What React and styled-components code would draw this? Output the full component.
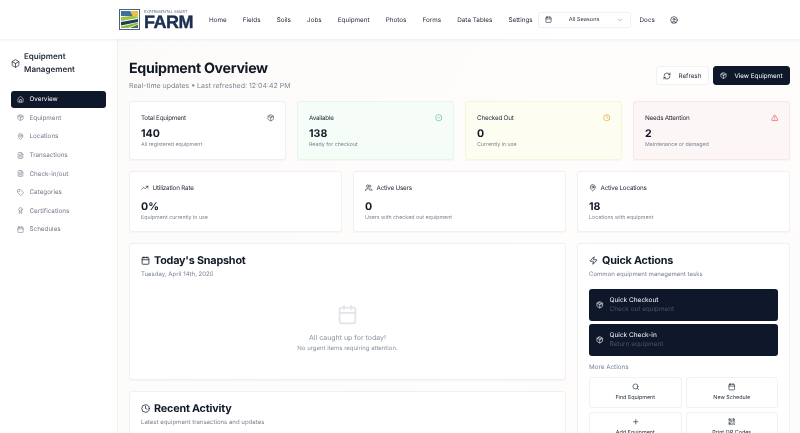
import React from 'react';
import styled, { createGlobalStyle } from 'styled-components';
import {
  Award, Box, Calendar, ChevronDown, CircleCheck, CircleUser, Clock, FileText, House, MapPin,
  Package, Plus, QrCode, RefreshCw, Search, Tag, TrendingUp, TriangleAlert, Users, Zap,
} from 'lucide-react';

const navLinks = ['Home', 'Fields', 'Soils', 'Jobs', 'Equipment', 'Photos', 'Forms', 'Data Tables', 'Settings'];

const sideLinks = [
  { label: 'Overview', icon: House, active: true },
  { label: 'Equipment', icon: Package },
  { label: 'Locations', icon: MapPin },
  { label: 'Transactions', icon: FileText },
  { label: 'Check-in/out', icon: FileText },
  { label: 'Categories', icon: Tag },
  { label: 'Certifications', icon: Award },
  { label: 'Schedules', icon: Calendar },
];

const stats = [
  { label: 'Total Equipment', value: '140', sub: 'All registered equipment', icon: Package, tone: 'plain' },
  { label: 'Available', value: '138', sub: 'Ready for checkout', icon: CircleCheck, tone: 'green' },
  { label: 'Checked Out', value: '0', sub: 'Currently in use', icon: Clock, tone: 'yellow' },
  { label: 'Needs Attention', value: '2', sub: 'Maintenance or damaged', icon: TriangleAlert, tone: 'red' },
];

const metrics = [
  { label: 'Utilization Rate', value: '0%', sub: 'Equipment currently in use', icon: TrendingUp },
  { label: 'Active Users', value: '0', sub: 'Users with checked out equipment', icon: Users },
  { label: 'Active Locations', value: '18', sub: 'Locations with equipment', icon: MapPin },
];

const tones = {
  plain: { bg: '#ffffff', border: '#eeeff2', icon: '#4b5563' },
  green: { bg: '#f6fdf8', border: '#e6f6ea', icon: '#5cb879' },
  yellow: { bg: '#fefdf2', border: '#f9f6d8', icon: '#e0a030' },
  red: { bg: '#fdf6f6', border: '#f9e6e6', icon: '#e0525a' },
};

const GlobalStyle = createGlobalStyle`
  html, body { margin: 0; padding: 0; height: 100%; overflow: hidden; }
  body {
    font-family: Inter, "Liberation Sans", sans-serif;
    color: #0f172a;
    background: #fff;
    text-rendering: geometricPrecision;
    -webkit-font-smoothing: antialiased;
  }
  * { box-sizing: border-box; }
`;

const Page = styled.div`
  width: 800px;
  height: 433px;
  display: flex;
  flex-direction: column;
  overflow: hidden;
  will-change: transform;
`;

const Header = styled.header`
  height: 39px;
  flex: none;
  display: flex;
  align-items: center;
  padding-left: 119px;
  background: #fff;
  box-shadow: 0 1px 3px rgba(15, 23, 42, 0.07);
  position: relative;
  z-index: 2;
`;

const Logo = styled.div`
  display: flex;
  align-items: center;
  gap: 4px;
  width: 90px;
`;

const LogoText = styled.div`
  display: flex;
  flex-direction: column;
  color: #1b2f52;
`;

const LogoSmall = styled.span`
  font-size: 3.7px;
  line-height: 6px;
  letter-spacing: 0.1px;
  color: #5b6472;
`;

const LogoBig = styled.span`
  font-family: "Liberation Sans", sans-serif;
  font-size: 18px;
  line-height: 15px;
  font-weight: 700;
  letter-spacing: -0.5px;
  -webkit-text-stroke: 0.4px #1b2f52;
`;

const Nav = styled.nav`
  display: flex;
  align-items: center;
  gap: 16.2px;
`;

const NavLink = styled.span`
  font-size: 6.3px;
  color: #1f2937;
  white-space: nowrap;
`;

const SeasonSelect = styled.div`
  width: 93px;
  height: 16px;
  margin-left: 5px;
  padding: 0 7px 0 6px;
  display: flex;
  align-items: center;
  justify-content: space-between;
  border: 1px solid #eef0f3;
  border-radius: 3px;
  font-size: 5.6px;
  color: #1f2937;
`;

const DocsLink = styled(NavLink)`
  margin-left: 9px;
`;

const UserIcon = styled(CircleUser)`
  margin-left: 15px;
  color: #1f2937;
`;

const Body = styled.div`
  flex: 1;
  display: flex;
  min-height: 0;
`;

const Sidebar = styled.aside`
  width: 118px;
  flex: none;
  padding: 11px 11px 0;
  background: #fff;
  border-right: 1px solid #f0f1f3;
`;

const SideTitle = styled.div`
  display: flex;
  align-items: center;
  gap: 4px;
  margin: 0 0 15px 0;
  font-size: 8px;
  line-height: 13px;
  font-weight: 600;
  color: #1f2937;
`;

const SideList = styled.div`
  display: flex;
  flex-direction: column;
  gap: 2px;
`;

const SideItem = styled.div`
  height: 16.6px;
  display: flex;
  align-items: center;
  gap: 5.5px;
  padding-left: 6px;
  border-radius: 3px;
  font-size: 6.3px;
  color: ${(p) => (p.$active ? '#f8fafc' : '#737b8a')};
  background: ${(p) => (p.$active ? '#0f172a' : 'transparent')};
`;

const Main = styled.main`
  flex: 1;
  min-width: 0;
  padding: 20px 10px 0 11px;
  background: linear-gradient(120deg, #fdfbfa, #fefdfb 60%, #fdfcfc);
  overflow: hidden;
`;

const TopRow = styled.div`
  display: flex;
  justify-content: space-between;
  align-items: flex-start;
  margin-bottom: 10px;
`;

const PageTitle = styled.h1`
  margin: 0;
  font-size: 14.2px;
  line-height: 20px;
  letter-spacing: -0.3px;
  font-weight: 700;
  color: #111827;
`;

const PageSub = styled.p`
  margin: 2px 0 0;
  font-size: 7px;
  line-height: 10px;
  color: #7b8494;
`;

const Buttons = styled.div`
  display: flex;
  gap: 4px;
  margin-top: 7px;
`;

const Button = styled.div`
  height: 19px;
  display: flex;
  align-items: center;
  gap: 7px;
  padding: 0 6.5px;
  border-radius: 3px;
  font-size: 6.3px;
  white-space: nowrap;
  color: ${(p) => (p.$dark ? '#f8fafc' : '#1f2937')};
  background: ${(p) => (p.$dark ? '#0f172a' : '#fff')};
  border: 1px solid ${(p) => (p.$dark ? '#0f172a' : '#f0f1f3')};
`;

const CardGrid = styled.div`
  display: grid;
  grid-template-columns: repeat(${(p) => p.$cols}, 1fr);
  gap: 11px;
  margin-bottom: 11px;
`;

const Card = styled.section`
  border-radius: 3px;
  background: ${(p) => p.$bg || '#fff'};
  border: 1px solid ${(p) => p.$border || '#eff0f3'};
  box-shadow: 0 0.5px 1px rgba(15, 23, 42, 0.03);
`;

const StatCard = styled(Card)`
  height: 59px;
  padding: 11px 11px 0;
`;

const MetricCard = styled(Card)`
  height: 61px;
  padding: 11px 11px 0;
`;

const StatHead = styled.div`
  display: flex;
  justify-content: space-between;
  align-items: center;
  height: 10px;
  font-size: 6.3px;
  letter-spacing: -0.2px;
  color: #1f2937;
`;

const MetricHead = styled(StatHead)`
  justify-content: flex-start;
  gap: 4px;
`;

const StatValue = styled.div`
  margin-top: 4px;
  font-size: 10.6px;
  line-height: 13px;
  font-weight: 700;
  color: #111827;
`;

const MetricValue = styled(StatValue)`
  margin-top: 7px;
`;

const StatSub = styled.div`
  margin-top: 2px;
  font-size: 5.3px;
  line-height: 7px;
  color: #7b8494;
`;

const Columns = styled.div`
  display: grid;
  grid-template-columns: 437px 213px;
  gap: 11px;
  align-items: start;
`;

const LeftColumn = styled.div`
  display: flex;
  flex-direction: column;
  gap: 11px;
`;

const PanelCard = styled(Card)`
  padding: 10px 11px 0;
  height: ${(p) => p.$height}px;
`;

const PanelTitle = styled.h2`
  margin: 0;
  display: flex;
  align-items: center;
  gap: 4px;
  height: 13px;
  font-size: 10.8px;
  letter-spacing: -0.2px;
  font-weight: 700;
  color: #111827;
`;

const PanelSub = styled.p`
  margin: 3px 0 0;
  font-size: 6.05px;
  line-height: 9px;
  color: #7b8494;
`;

const EmptyState = styled.div`
  margin-top: 25px;
  display: flex;
  flex-direction: column;
  align-items: center;
  color: #8a93a3;
`;

const EmptyTitle = styled.div`
  margin-top: 8px;
  font-size: 7px;
  line-height: 10px;
`;

const EmptySub = styled.div`
  margin-top: 1px;
  font-size: 6px;
  line-height: 9px;
`;

const QuickList = styled.div`
  display: flex;
  flex-direction: column;
  gap: 3.5px;
  margin-top: 10px;
`;

const QuickButton = styled.div`
  height: 31.5px;
  display: flex;
  align-items: center;
  gap: 6px;
  padding-left: 7px;
  border-radius: 3px;
  background: #0f172a;
  color: #f8fafc;
`;

const QuickLabel = styled.div`
  font-size: 6.5px;
  line-height: 9px;
`;

const QuickHint = styled.div`
  font-size: 6.4px;
  line-height: 9px;
  color: #4a5365;
`;

const MoreLabel = styled.div`
  margin: 7px 0 5px;
  font-size: 6.3px;
  line-height: 9px;
  color: #7b8494;
`;

const ActionGrid = styled.div`
  display: grid;
  grid-template-columns: 1fr 1fr;
  gap: 4px;
`;

const ActionButton = styled.div`
  height: 31px;
  display: flex;
  flex-direction: column;
  align-items: center;
  justify-content: center;
  gap: 4px;
  border: 1px solid #f0f1f3;
  border-radius: 3px;
  background: #fff;
  font-size: 5.4px;
  color: #1f2937;
`;

const LogoMark = () => (
  <svg width="21" height="21" viewBox="0 0 21 21">
    <rect x="0.5" y="0.5" width="20" height="20" fill="#fff" stroke="#4b5f80" />
    <rect x="2" y="2" width="17" height="5" fill="#3f6f9c" />
    <path d="M11 2h8v5l-5 1z" fill="#e8c14a" />
    <path d="M2 8l10-1 7 0.5v1.5L2 12z" fill="#9cc24a" />
    <path d="M2 13l17-3v3L2 16.5z" fill="#1f3f4a" />
    <path d="M2 17.5l17-4v1.5L9 19H2z" fill="#8fbb45" />
    <path d="M11 19l8-3.5V19z" fill="#3d7a44" />
  </svg>
);

function App() {
  return (
    <Page>
      <GlobalStyle />
      <Header>
        <Logo>
          <LogoMark />
          <LogoText>
            <LogoSmall>EXPERIMENTAL SMART</LogoSmall>
            <LogoBig>FARM</LogoBig>
          </LogoText>
        </Logo>
        <Nav>
          {navLinks.map((link) => <NavLink key={link}>{link}</NavLink>)}
        </Nav>
        <SeasonSelect>
          <Calendar size={7} />
          <span>All Seasons</span>
          <ChevronDown size={6} color="#6b7280" />
        </SeasonSelect>
        <DocsLink>Docs</DocsLink>
        <UserIcon size={8} />
      </Header>
      <Body>
        <Sidebar>
          <SideTitle>
            <Box size={9} />
            <span>Equipment<br />Management</span>
          </SideTitle>
          <SideList>
            {sideLinks.map(({ label, icon: Icon, active }) => (
              <SideItem key={label} $active={active}>
                <Icon size={7} />
                {label}
              </SideItem>
            ))}
          </SideList>
        </Sidebar>
        <Main>
          <TopRow>
            <div>
              <PageTitle>Equipment Overview</PageTitle>
              <PageSub>Real-time updates • Last refreshed: 12:04:42 PM</PageSub>
            </div>
            <Buttons>
              <Button><RefreshCw size={8} />Refresh</Button>
              <Button $dark><Package size={7} />View Equipment</Button>
            </Buttons>
          </TopRow>
          <CardGrid $cols={4}>
            {stats.map(({ label, value, sub, icon: Icon, tone }) => (
              <StatCard key={label} $bg={tones[tone].bg} $border={tones[tone].border}>
                <StatHead>
                  {label}
                  <Icon size={7.5} color={tones[tone].icon} />
                </StatHead>
                <StatValue>{value}</StatValue>
                <StatSub>{sub}</StatSub>
              </StatCard>
            ))}
          </CardGrid>
          <CardGrid $cols={3}>
            {metrics.map(({ label, value, sub, icon: Icon }) => (
              <MetricCard key={label}>
                <MetricHead>
                  <Icon size={7.5} />
                  {label}
                </MetricHead>
                <MetricValue>{value}</MetricValue>
                <StatSub>{sub}</StatSub>
              </MetricCard>
            ))}
          </CardGrid>
          <Columns>
            <LeftColumn>
              <PanelCard $height={137}>
                <PanelTitle><Calendar size={9} />Today's Snapshot</PanelTitle>
                <PanelSub>Tuesday, April 14th, 2026</PanelSub>
                <EmptyState>
                  <Calendar size={21} color="#e1e4e9" />
                  <EmptyTitle>All caught up for today!</EmptyTitle>
                  <EmptySub>No urgent items requiring attention.</EmptySub>
                </EmptyState>
              </PanelCard>
              <PanelCard $height={90}>
                <PanelTitle><Clock size={9} />Recent Activity</PanelTitle>
                <PanelSub>Latest equipment transactions and updates</PanelSub>
              </PanelCard>
            </LeftColumn>
            <PanelCard $height={240}>
              <PanelTitle><Zap size={9} />Quick Actions</PanelTitle>
              <PanelSub>Common equipment management tasks</PanelSub>
              <QuickList>
                <QuickButton>
                  <Package size={7.5} />
                  <div>
                    <QuickLabel>Quick Checkout</QuickLabel>
                    <QuickHint>Check out equipment</QuickHint>
                  </div>
                </QuickButton>
                <QuickButton>
                  <Package size={7.5} />
                  <div>
                    <QuickLabel>Quick Check-in</QuickLabel>
                    <QuickHint>Return equipment</QuickHint>
                  </div>
                </QuickButton>
              </QuickList>
              <MoreLabel>More Actions</MoreLabel>
              <ActionGrid>
                <ActionButton><Search size={7.5} />Find Equipment</ActionButton>
                <ActionButton><Calendar size={7.5} />New Schedule</ActionButton>
                <ActionButton><Plus size={7.5} />Add Equipment</ActionButton>
                <ActionButton><QrCode size={7.5} />Print QR Codes</ActionButton>
              </ActionGrid>
            </PanelCard>
          </Columns>
        </Main>
      </Body>
    </Page>
  );
}

export default App;
